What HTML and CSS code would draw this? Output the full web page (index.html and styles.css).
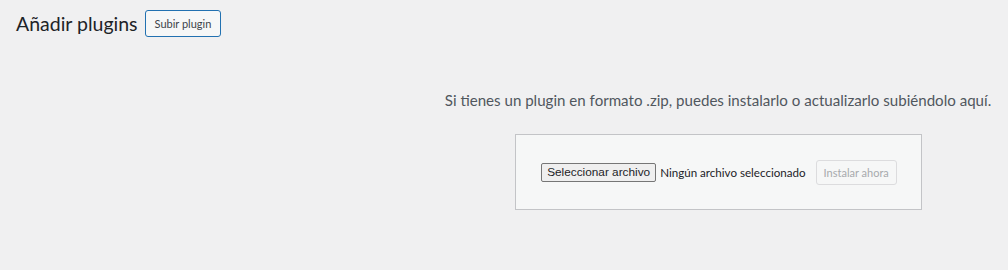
FILE: index.html
```html
<!DOCTYPE html>
<html lang="es">
<head>
<meta charset="utf-8">
<title>Añadir plugins</title>
<link rel="stylesheet" href="styles.css">
</head>
<body>
<div class="wrap">
  <div class="title-row">
    <h1 class="page-title">Añadir plugins</h1>
    <a class="title-action" href="#">Subir plugin</a>
  </div>
  <div class="upload-plugin">
    <p class="install-help">Si tienes un plugin en formato .zip, puedes instalarlo o actualizarlo subiéndolo aquí.</p>
    <form class="upload-form">
      <span class="file-btn">Seleccionar archivo</span>
      <span class="file-name">Ningún archivo seleccionado</span>
      <span class="install-btn">Instalar ahora</span>
    </form>
  </div>
</div>
</body>
</html>
```

FILE: styles.css
```css
html, body {
  margin: 0;
  padding: 0;
  background: #f0f0f1;
}
body {
  font-family: Lato, "Open Sans", sans-serif;
  font-size: 13px;
  color: #3c434a;
  width: 1008px;
  height: 270px;
  overflow: hidden;
}
.wrap {
  padding: 10px 0 0 16px;
}
.title-row {
  display: flex;
  align-items: center;
  gap: 7px;
  height: 27px;
}
.page-title {
  margin: 0;
  font-size: 19.5px;
  font-weight: 400;
  color: #1d2327;
  line-height: 27px;
}
.title-action {
  box-sizing: border-box;
  height: 27px;
  display: flex;
  align-items: center;
  padding: 0 9px;
  border: 1px solid #2271b1;
  border-radius: 3px;
  background: #f6f7f7;
  font-size: 11px;
  text-decoration: none;
  color: #3c434a;
}
.upload-plugin {
  margin: 53px 0 0 412px;
  width: 580px;
  display: flex;
  flex-direction: column;
  align-items: center;
}
.install-help {
  margin: 0;
  font-size: 15.1px;
  line-height: 20px;
  color: #50575e;
  white-space: nowrap;
}
.upload-form {
  margin-top: 24px;
  box-sizing: border-box;
  width: 407px;
  height: 76px;
  border: 1px solid #c3c4c7;
  background: #f6f7f7;
  display: flex;
  align-items: center;
  justify-content: center;
  padding-left: 2px;
}
.file-btn {
  box-sizing: border-box;
  height: 19px;
  padding: 0 5px;
  border: 1px solid #767676;
  border-radius: 2px;
  background: #efefef;
  font-family: "Liberation Sans", Arial, sans-serif;
  font-size: 11.8px;
  line-height: 17px;
  color: #1d2327;
}
.file-name {
  margin-left: 4px;
  font-size: 11.6px;
  color: #1d2327;
}
.install-btn {
  box-sizing: border-box;
  margin-left: 10px;
  height: 25px;
  padding: 0 7px;
  border: 1px solid #dcdcde;
  border-radius: 3px;
  background: #f6f7f7;
  color: #a7aaad;
  font-size: 11px;
  line-height: 23px;
}
```
